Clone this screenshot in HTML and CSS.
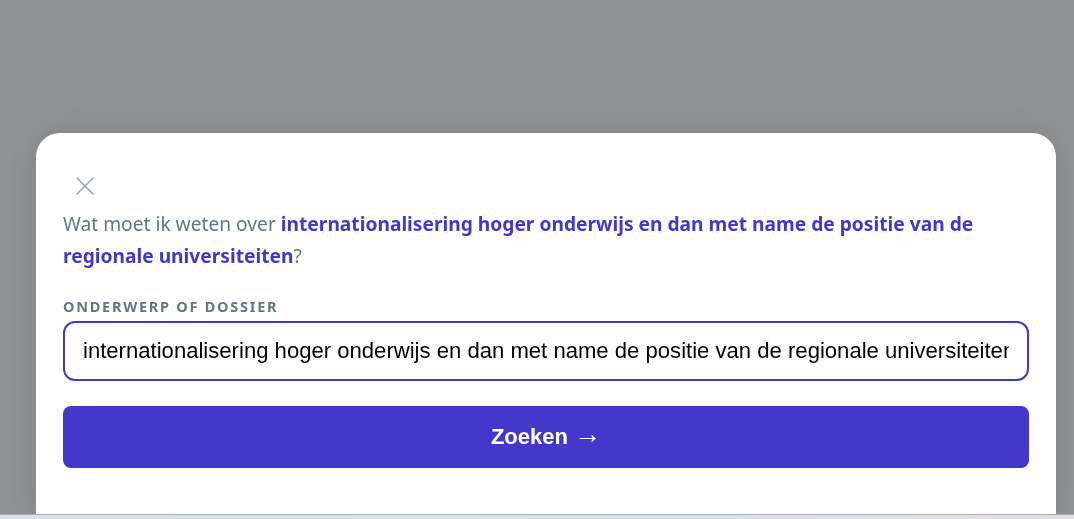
FILE: index.html
```html
<!DOCTYPE html>
<html lang="nl">
<head>
	<meta charset="utf-8"/>
	<meta name="viewport" content="width=device-width,initial-scale=1.0"/>
	<title>Zoeken</title>
	<link rel="stylesheet" href="styles.css">
</head>
<body>

<!--zoek dialoog-->
<div class="search_dialog">
	<div class="_mask"></div>
	<div class="dialog_block">
		<button class="close_btn" type="button" aria-label="Sluiten">
			<svg width="20" height="20" viewBox="0 0 20 20" fill="none" stroke="currentColor" stroke-width="1.5" stroke-linecap="round">
				<path d="M2 2L18 18M18 2L2 18"/>
			</svg>
		</button>
		<p class="question">Wat moet ik weten over <strong>internationalisering hoger onderwijs en dan met name de positie van de regionale universiteiten</strong>?</p>
		<label class="field_label" for="topic">Onderwerp of dossier</label>
		<input class="field_input" id="topic" type="text" value="internationalisering hoger onderwijs en dan met name de positie van de regionale universiteiten">
		<a class="search_btn" href="javascript:void(0);">Zoeken <span class="arrow">&rarr;</span></a>
	</div>
	<div class="page_strip"></div>
</div>

</body>
</html>
```

FILE: styles.css
```css
html,body{
	margin: 0;
	height: 100%;
	overflow: hidden;
}
body{
	font-family: "Noto Sans", "Open Sans", sans-serif;
	background: #f1f5f9;
}
.search_dialog{
	display: flex;
	flex-direction: column;
	height: 100%;
}
.search_dialog ._mask{
	position: fixed;
	z-index: 1;
	top: 0;
	right: 0;
	left: 0;
	bottom: 0;
	background: #919294;
}
.search_dialog .dialog_block{
	position: relative;
	z-index: 2;
	flex: 1;
	margin: 133px 18px 0 36px;
	padding: 43px 27px 0;
	background-color: #FFFFFF;
	border-radius: 24px 24px 0 0;
	box-shadow: 0 0 30px rgba(0,0,0,0.12);
}
.close_btn{
	display: block;
	padding: 0;
	margin: 0 0 0 12px;
	width: 20px;
	height: 20px;
	border: 0;
	background: none;
	color: #94a3b8;
	cursor: pointer;
}
.close_btn svg{
	display: block;
}
.question{
	margin: 12px 0 0;
	font-size: 19.2px;
	line-height: 32px;
	color: #64748b;
}
.question strong{
	color: #4338ca;
	font-weight: 700;
}
.field_label{
	display: block;
	margin-top: 25px;
	font-size: 14.5px;
	line-height: 18px;
	font-weight: 700;
	letter-spacing: 0.12em;
	text-transform: uppercase;
	color: #64748b;
}
.field_input{
	display: block;
	box-sizing: border-box;
	width: 100%;
	height: 60px;
	margin-top: 6px;
	padding: 0 18px;
	border: 2px solid #4338ca;
	border-radius: 12px;
	font-family: "Liberation Sans", Arial, sans-serif;
	font-size: 22.1px;
	color: #000;
	outline: none;
}
.search_btn{
	display: block;
	margin-top: 25px;
	height: 62px;
	line-height: 62px;
	border-radius: 8px;
	background: #4338ca;
	color: #FFFFFF;
	text-align: center;
	text-decoration: none;
	font-family: "Liberation Sans", Arial, sans-serif;
	font-size: 22px;
	font-weight: 700;
}
.search_btn .arrow{
	font-weight: 400;
	font-size: 27px;
	line-height: 1;
	vertical-align: 1px;
}
.page_strip{
	position: fixed;
	z-index: 3;
	left: 0;
	right: 0;
	bottom: 0;
	height: 4px;
	background: linear-gradient(90deg, #d3e2ef, #d8e1ea 70%, #e6dde2);
	border-top: 1px solid #a9adb3;
}
```
